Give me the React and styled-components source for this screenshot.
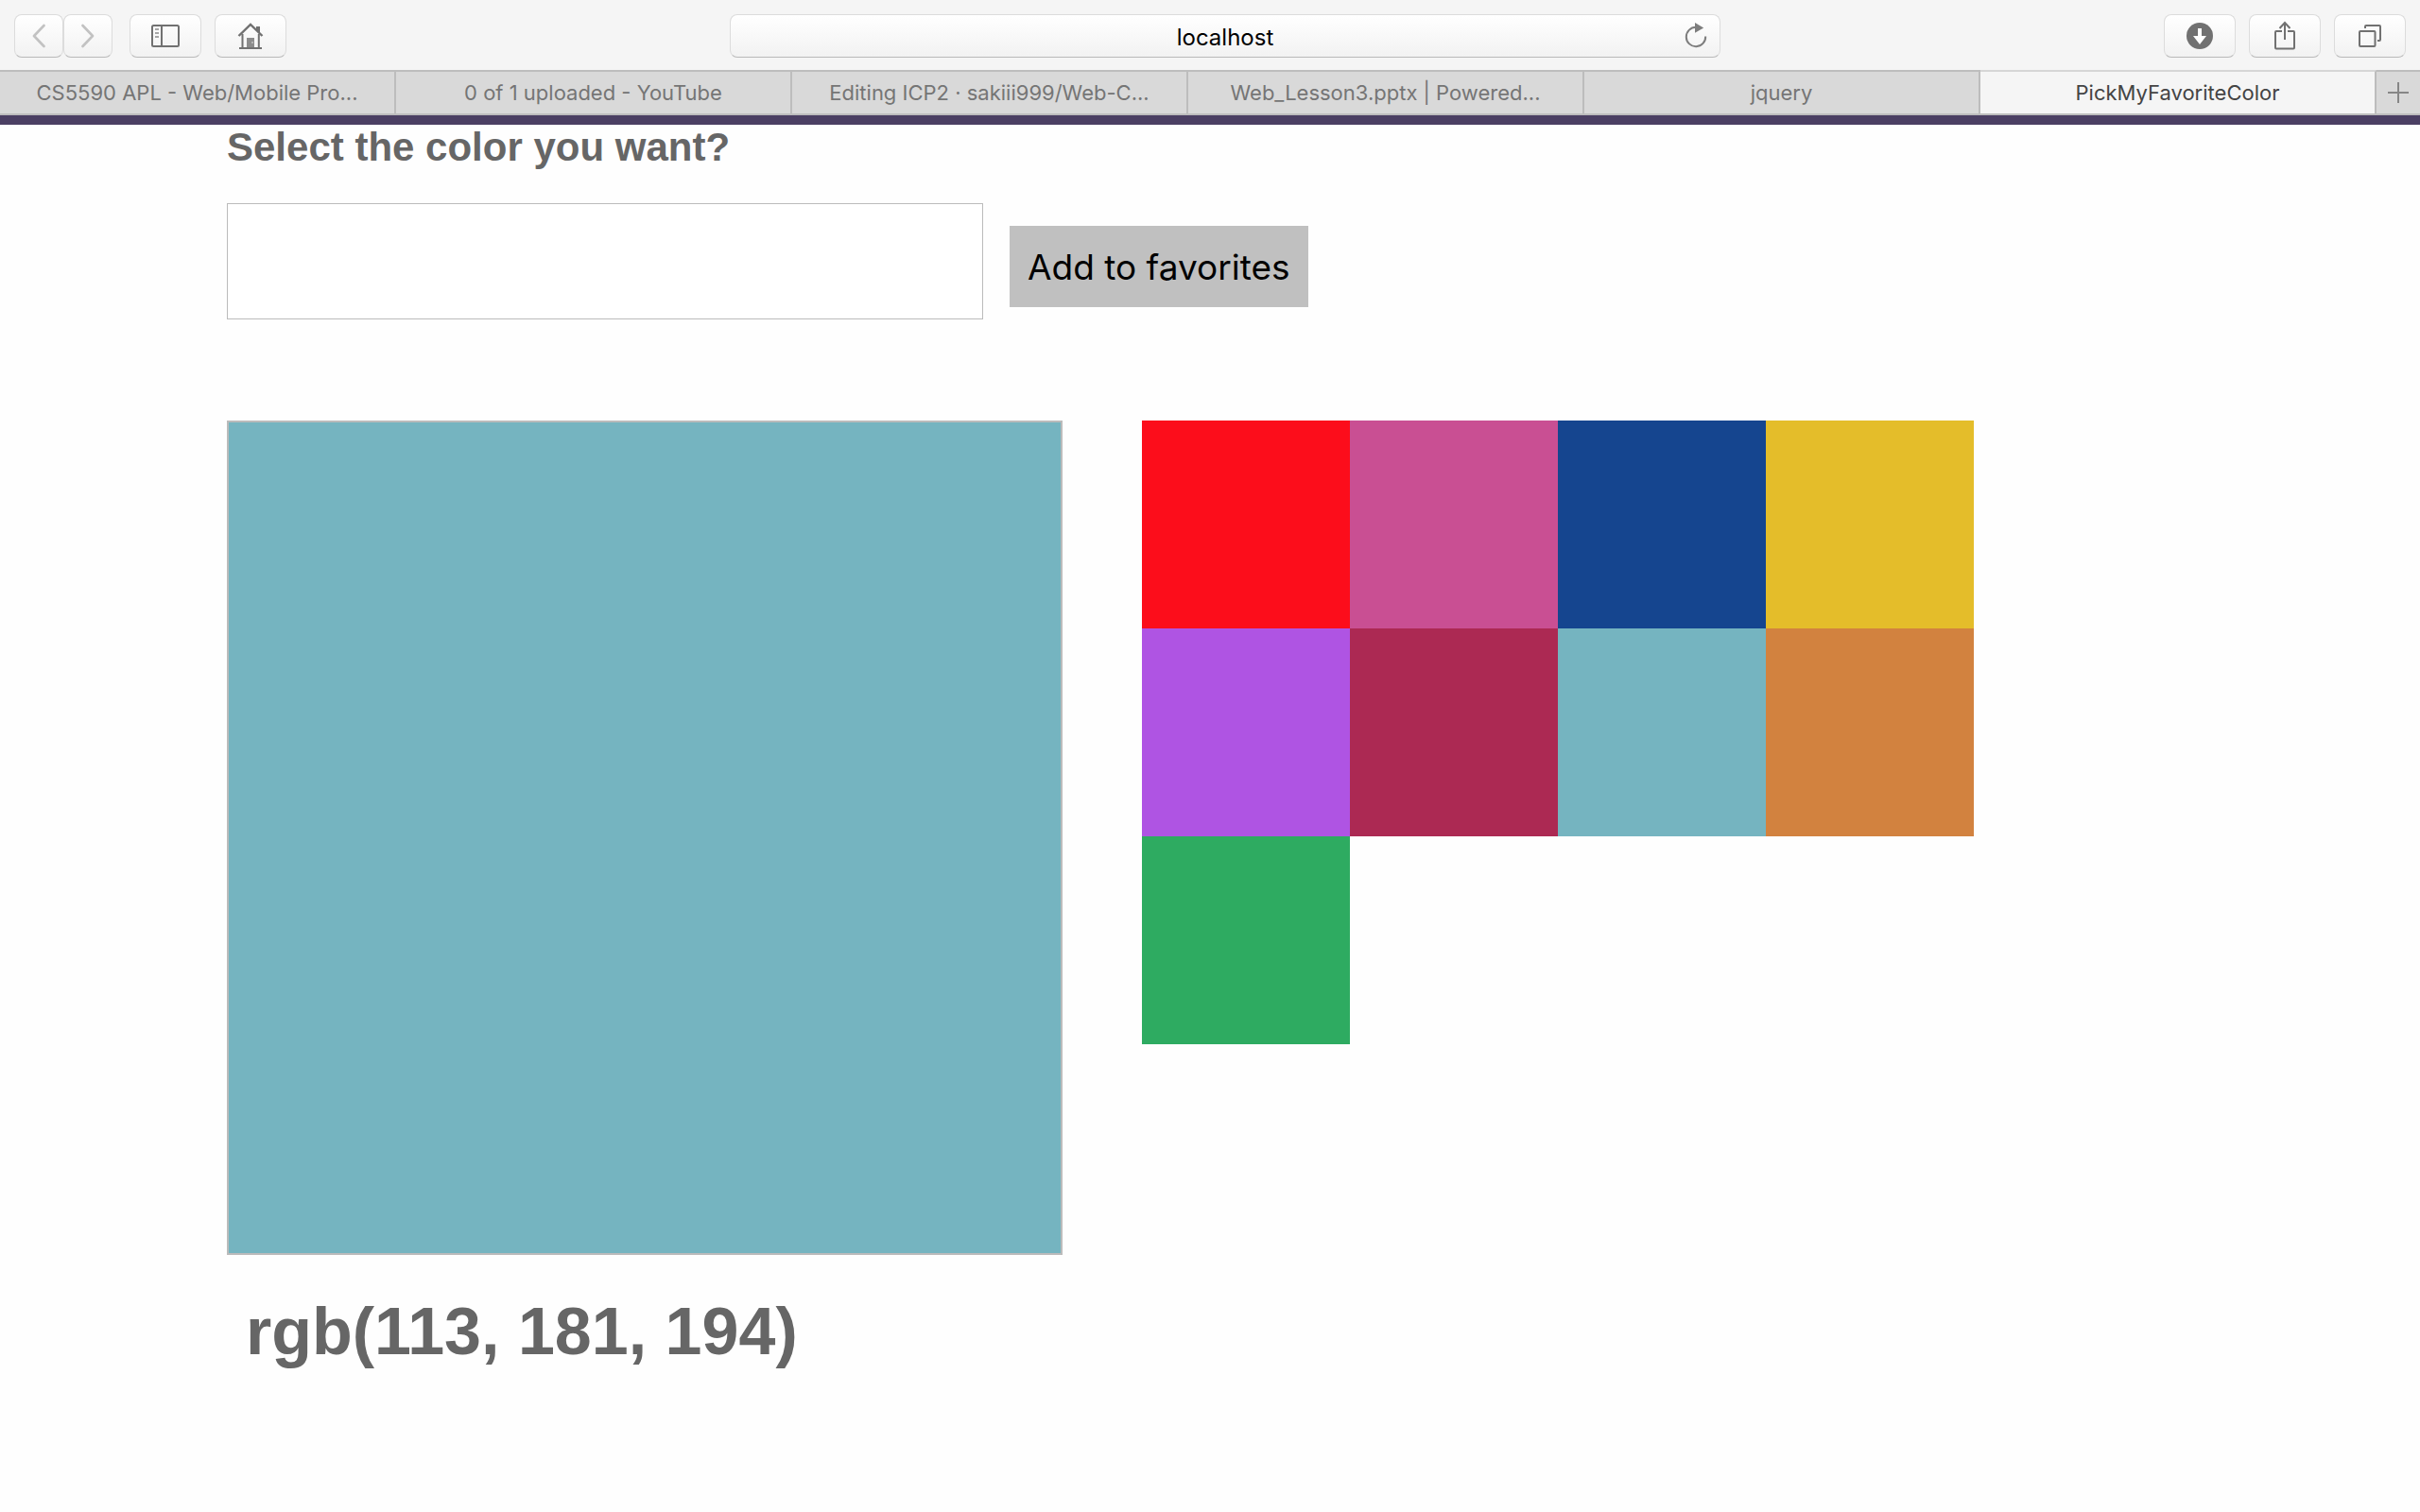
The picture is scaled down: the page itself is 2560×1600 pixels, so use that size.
import React, { useState } from "react";
import styled, { createGlobalStyle } from "styled-components";

const GlobalStyle = createGlobalStyle`
  *, *::before, *::after { box-sizing: border-box; }
  body {
    margin: 0;
    background: #fefefe;
    color: #666;
    font-family: "Liberation Sans", Arial, sans-serif;
  }
  button, input { font: inherit; color: inherit; border-radius: 0; }
`;

const systemFont = `Inter, "Noto Sans", sans-serif`;

const Toolbar = styled.header`
  display: flex;
  align-items: center;
  justify-content: space-between;
  height: 74px;
  padding: 2px 15px 0;
  background: #f5f5f5;
`;

const ToolGroup = styled.div`
  display: flex;
  gap: 14px;
`;

const HistoryButtons = styled.div`
  display: flex;
  margin-right: 4px;
`;

const raised = `
  height: 46px;
  border: 1px solid #dcdcdc;
  border-bottom-color: #b9b9b9;
  border-radius: 8px;
  background: linear-gradient(#fff, #f2f2f2);
`;

const ToolButton = styled.button`
  ${raised}
  display: flex;
  align-items: center;
  justify-content: center;
  width: ${(p) => (p.$narrow ? 52 : 76)}px;
  padding: 0;
  color: ${(p) => (p.$narrow ? "#c2c2c2" : "#717171")};
`;

const AddressBar = styled.form`
  ${raised}
  display: flex;
  flex: 0 1 1048px;
  padding-left: 50px;
`;

const AddressInput = styled.input`
  flex: 1;
  min-width: 0;
  border: 0;
  padding: 2px 0 0;
  outline: 0;
  background: none;
  color: #000;
  font-family: ${systemFont};
  font-size: 24px;
  text-align: center;
`;

const ReloadButton = styled.button`
  display: flex;
  align-items: center;
  justify-content: center;
  width: 50px;
  border: 0;
  padding: 0;
  background: none;
  color: #7d7d7d;
`;

const TabStrip = styled.nav`
  display: flex;
  height: 48px;
  border-bottom: 2px solid #bdbdbd;
  background: #d9d9d9;
`;

const Tab = styled.button`
  flex: 1 1 0;
  min-width: 0;
  border: 0;
  border-top: 2px solid ${(p) => (p.$active ? "#d6d6d6" : "#bdbdbd")};
  border-right: 2px solid #bdbdbd;
  padding: 0 16px;
  background: ${(p) => (p.$active ? "#f5f5f5" : "#d9d9d9")};
  color: ${(p) => (p.$active ? "#444" : "#757575")};
  font-family: ${systemFont};
  font-size: 22px;
  line-height: 44px;
  white-space: nowrap;
  overflow: hidden;
`;

const NewTabButton = styled.button`
  display: flex;
  align-items: center;
  justify-content: center;
  width: 46px;
  border: 0;
  border-top: 2px solid #bdbdbd;
  padding: 0;
  background: none;
  color: #868686;
`;

const Page = styled.main`
  border-top: 10px solid #4b3f63;
  padding: 0 240px;
`;

const Title = styled.h1`
  margin: 0 0 35px;
  font-size: 42px;
  line-height: 48px;
`;

const FavoriteForm = styled.form`
  display: flex;
  align-items: center;
  gap: 28px;
  margin-bottom: 107px;
`;

const ColorInput = styled.input`
  flex: 0 1 800px;
  min-width: 0;
  height: 123px;
  border: 1px solid #bbb;
  padding: 0 20px;
  background: #fff;
  font-size: 42px;
`;

const AddButton = styled.button`
  height: 86px;
  margin-top: 10px;
  border: 0;
  padding: 2px 19px 0;
  background: #c0c0c0;
  color: #000;
  font-family: ${systemFont};
  font-size: 37px;
  white-space: nowrap;
`;

const Picker = styled.div`
  display: grid;
  grid-template-columns: minmax(0, 884px) minmax(0, 880px);
  align-items: start;
  gap: 84px;
`;

const Preview = styled.div`
  aspect-ratio: 884 / 883;
  border: 2px solid #bbb;
  background: ${(p) => p.$color};
`;

const ColorName = styled.output`
  display: block;
  padding: 41px 20px;
  font-size: 70px;
  font-weight: bold;
  line-height: 80px;
`;

const Palette = styled.div`
  display: grid;
  grid-template-columns: repeat(4, 1fr);
`;

const Swatch = styled.button`
  aspect-ratio: 1;
  border: 0;
  padding: 0;
  background: ${(p) => p.$color};
`;

const Icon = ({ w, h, width = 2, children }) => (
  <svg width={w} height={h} viewBox={`0 0 ${w} ${h}`} fill="none" stroke="currentColor" strokeWidth={width} aria-hidden="true">
    {children}
  </svg>
);

const BackIcon = () => (
  <Icon w={14} h={26} width={2.6}>
    <path d="M12.5 2 2 13l10.500 11" strokeLinecap="round" strokeLinejoin="round" />
  </Icon>
);

const ForwardIcon = () => (
  <Icon w={14} h={26} width={2.6}>
    <path d="M1.500 2 12 13 1.500 24" strokeLinecap="round" strokeLinejoin="round" />
  </Icon>
);

const SidebarIcon = () => (
  <Icon w={30} h={24}>
    <rect x="1" y="1" width="28" height="22" rx="1.5" />
    <path d="M11 1v22" />
    <path d="M4 5h4M4 9h4M4 13h4" strokeWidth="1.6" opacity="0.8" />
  </Icon>
);

const HomeIcon = () => (
  <Icon w={28} h={28}>
    <path d="M1.500 14 14 2l12.500 12" strokeWidth="2.400" />
    <path d="M5.500 12v15M22.800 12v15M2 27h24" />
    <path d="M20 4h4v7l-4-3.500z" fill="currentColor" stroke="none" />
    <path d="M10 16h8v10h-8z" fill="currentColor" stroke="none" opacity="0.8" />
    <circle cx="16" cy="21" r="0.700" fill="#fff" stroke="none" />
  </Icon>
);

const ReloadIcon = () => (
  <Icon w={24} h={28}>
    <path d="M22.200 14.500A10.200 10.200 0 1 1 12 4.800" />
    <path d="M11 0l9.200 5.400L11 10.800z" fill="currentColor" stroke="none" />
  </Icon>
);

const DownloadIcon = () => (
  <Icon w={28} h={28}>
    <circle cx="14" cy="14" r="14" fill="currentColor" stroke="none" />
    <path d="M12 6h4v8h5l-7 9-7-9h5z" fill="#fff" stroke="none" />
  </Icon>
);

const ShareIcon = () => (
  <Icon w={22} h={32}>
    <path d="M8 11H2Q1 11 1 12v16.500Q1 29.500 2 29.500h18q1 0 1-1V12q0-1-1-1h-6" />
    <path d="M11 20V2M5.500 8 11 2l5.500 6" />
  </Icon>
);

const TabsIcon = () => (
  <Icon w={24} h={24}>
    <rect x="1" y="7" width="16.500" height="16" rx="1" />
    <path d="M7 4V2q0-1 1-1h14q1 0 1 1v14q0 1-1 1h-2" />
  </Icon>
);

const PlusIcon = () => (
  <Icon w={22} h={22}>
    <path d="M11 0v22M0 11h22" />
  </Icon>
);

const TABS = [
  "CS5590 APL - Web/Mobile Pro...",
  "0 of 1 uploaded - YouTube",
  "Editing ICP2 · sakiii999/Web-C...",
  "Web_Lesson3.pptx | Powered...",
  "jquery",
  "PickMyFavoriteColor",
];

const COLORS = [
  { name: "Red", shade: "#fc0d1b" },
  { name: "Pink", shade: "#c94f93" },
  { name: "Blue", shade: "#15458f" },
  { name: "Yellow", shade: "#e4bd2a" },
  { name: "Purple", shade: "#af54e3" },
  { name: "Crimson", shade: "#ac2953" },
  { name: "Teal", shade: "#75b4c0", value: "rgb(113, 181, 194)" },
  { name: "Orange", shade: "#d2823f" },
  { name: "Green", shade: "#2eab61" },
];

export default function App() {
  const [selected, setSelected] = useState(COLORS[6]);
  const [activeTab, setActiveTab] = useState(5);

  return (
    <>
      <GlobalStyle />
      <Toolbar>
        <ToolGroup>
          <HistoryButtons>
            <ToolButton $narrow aria-label="Back"><BackIcon /></ToolButton>
            <ToolButton $narrow aria-label="Forward"><ForwardIcon /></ToolButton>
          </HistoryButtons>
          <ToolButton aria-label="Sidebar"><SidebarIcon /></ToolButton>
          <ToolButton aria-label="Home"><HomeIcon /></ToolButton>
        </ToolGroup>
        <AddressBar onSubmit={(e) => e.preventDefault()}>
          <AddressInput aria-label="Address" defaultValue="localhost" />
          <ReloadButton type="button" aria-label="Reload"><ReloadIcon /></ReloadButton>
        </AddressBar>
        <ToolGroup>
          <ToolButton aria-label="Downloads"><DownloadIcon /></ToolButton>
          <ToolButton aria-label="Share"><ShareIcon /></ToolButton>
          <ToolButton aria-label="Show all tabs"><TabsIcon /></ToolButton>
        </ToolGroup>
      </Toolbar>
      <TabStrip>
        {TABS.map((title, i) => (
          <Tab key={title} $active={i === activeTab} onClick={() => setActiveTab(i)}>
            {title}
          </Tab>
        ))}
        <NewTabButton aria-label="New tab"><PlusIcon /></NewTabButton>
      </TabStrip>
      <Page>
        <Title><label htmlFor="favorite">Select the color you want?</label></Title>
        <FavoriteForm onSubmit={(e) => e.preventDefault()}>
          <ColorInput id="favorite" type="text" />
          <AddButton type="submit">Add to favorites</AddButton>
        </FavoriteForm>
        <Picker>
          <section>
            <Preview $color={selected.shade} />
            <ColorName>{selected.value || selected.shade}</ColorName>
          </section>
          <Palette>
            {COLORS.map((color) => (
              <Swatch
                key={color.name}
                $color={color.shade}
                aria-label={color.name}
                onClick={() => setSelected(color)}
              />
            ))}
          </Palette>
        </Picker>
      </Page>
    </>
  );
}
